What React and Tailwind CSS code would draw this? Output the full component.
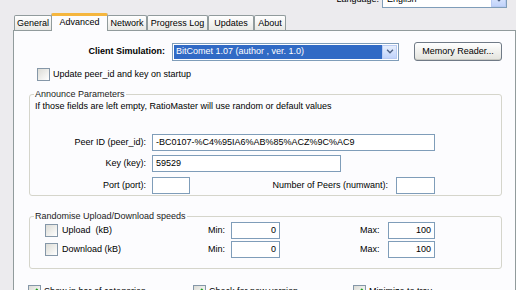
import React from "react";

const FONT = { fontFamily: '"Liberation Sans", Arial, sans-serif' };

function Check({ checked }) {
    return (
        <span className="relative inline-block w-[13px] h-[13px] shrink-0 border border-[#8597a8] bg-gradient-to-br from-[#dcdcd6] to-[#ffffff]">
            {checked && (
                <svg viewBox="0 0 11 11" className="absolute inset-0 w-[11px] h-[11px]">
                    <path d="M2.5 5.5 L4.5 7.5 L8.5 3" stroke="#21a121" strokeWidth="2" fill="none" />
                </svg>
            )}
        </span>
    );
}

function Arrow() {
    return (
        <svg viewBox="0 0 9 6" className="w-[8px] h-[5px]">
            <path d="M1 1 L4.5 4.5 L8 1" stroke="#4d6185" strokeWidth="1.6" fill="none" />
        </svg>
    );
}

function Field({ width, value, right }) {
    return (
        <div
            className={`h-[17px] border border-[#7f9db9] bg-white px-[3px] flex items-center leading-none ${right ? "justify-end" : ""}`}
            style={{ width }}
        >
            {value}
        </div>
    );
}

const TABS = [
    { name: "General", w: 38 },
    { name: "Advanced", w: 55, active: true },
    { name: "Network", w: 40 },
    { name: "Progress Log", w: 61 },
    { name: "Updates", w: 46 },
    { name: "About", w: 32 },
];

function App() {
    return (
        <div className="w-[516px] h-[290px] overflow-hidden bg-[#ecebee] text-[9px] text-black leading-[11px] flex flex-col" style={FONT}>
            {/* language */}
            <div className="h-[17px] -mt-[9px] flex items-center justify-end pr-[9px] gap-[3px]">
                <span>Language:</span>
                <div className="w-[125px] h-[17px] border border-[#7f9db9] bg-white flex items-center">
                    <span className="flex-1 pl-[4px]">English</span>
                    <div className="w-[15px] h-[15px] bg-gradient-to-b from-[#e6eefc] to-[#c1d3fb] border border-[#b9cbf3] flex items-center justify-center">
                        <Arrow />
                    </div>
                </div>
            </div>

            {/* tabs */}
            <div className="ml-[14px] mt-[5px] h-[18px] -mb-px flex items-end relative z-10">
                {TABS.map((t) =>
                    t.active ? (
                        <div key={t.name} className="h-[18px] -mx-[1px] border-x border-[#919b9c] border-t-[3px] border-t-[#f5b63e] bg-[#fcfcfe] flex items-start justify-center pt-[1px] rounded-t-[2px] whitespace-nowrap" style={{ width: t.w + 2 }}>
                            {t.name}
                        </div>
                    ) : (
                        <div key={t.name} className="h-[15px] mb-px border border-b-0 border-[#919b9c] bg-gradient-to-b from-[#ffffff] to-[#e8e8e4] flex items-center justify-center rounded-t-[2px] whitespace-nowrap" style={{ width: t.w }}>
                            {t.name}
                        </div>
                    )
                )}
            </div>

            {/* panel */}
            <div className="ml-[13px] w-[503px] flex-1 border border-[#919b9c] bg-[#fcfcfe] flex flex-col pt-[11px]">
                <div className="h-[19px] flex items-center">
                    <div className="w-[151px] text-right font-bold">Client Simulation:</div>
                    <div className="ml-[7px] w-[227px] h-[18px] border border-[#7f9db9] bg-white flex items-center p-[1px]">
                        <div className="flex-1 h-full bg-[#316ac5] text-white flex items-center pl-[2px]">BitComet 1.07 (author , ver. 1.0)</div>
                        <div className="w-[15px] h-full bg-gradient-to-b from-[#e6eefc] to-[#c1d3fb] border border-[#b9cbf3] flex items-center justify-center">
                            <Arrow />
                        </div>
                    </div>
                    <button className="ml-[15px] w-[88px] h-[19px] rounded-[3px] border border-[#707a86] bg-gradient-to-b from-[#ffffff] to-[#e3e3dd] shadow-[inset_0_-1px_0_#c9c9c2] whitespace-nowrap">
                        Memory Reader...
                    </button>
                </div>

                <div className="mt-[6px] h-[14px] flex items-center gap-[3px] ml-[23px]">
                    <Check />
                    <span>Update peer_id and key on startup</span>
                </div>

                <fieldset className="mt-[8px] ml-[15px] w-[473px] border border-[#d5d5cb] rounded-[3px] pb-[1px]">
                    <legend className="ml-[4px] px-[1px] text-[#222]">Announce Parameters</legend>
                    <div className="pl-[5px] mt-[1px]">If those fields are left empty, RatioMaster will use random or default values</div>
                    <div className="mt-[22px] h-[17px] flex items-center">
                        <div className="w-[116px] text-right">Peer ID (peer_id):</div>
                        <div className="ml-[6px]"><Field width={283} value="-BC0107-%C4%95IA6%AB%85%ACZ%9C%AC9" /></div>
                    </div>
                    <div className="mt-[4px] h-[17px] flex items-center">
                        <div className="w-[116px] text-right">Key (key):</div>
                        <div className="ml-[6px]"><Field width={189} value="59529" /></div>
                    </div>
                    <div className="mt-[5px] h-[17px] flex items-center">
                        <div className="w-[116px] text-right">Port (port):</div>
                        <div className="ml-[6px]"><Field width={38} value="" /></div>
                        <div className="w-[198px] text-right">Number of Peers (numwant):</div>
                        <div className="ml-[8px]"><Field width={39} value="" /></div>
                    </div>
                </fieldset>

                <fieldset className="mt-[15px] ml-[15px] w-[473px] border border-[#d5d5cb] rounded-[3px] pb-[10px] flex flex-col gap-[2px]">
                    <legend className="ml-[4px] px-[1px] text-[#222]">Randomise Upload/Download speeds</legend>
                    {[["Upload  (kB)", "0", "100"], ["Download (kB)", "0", "100"]].map(([label, min, max]) => (
                        <div key={label} className="h-[17px] flex items-center">
                            <div className="ml-[15px] w-[163px] flex items-center gap-[4px]">
                                <Check />
                                <span className="whitespace-pre">{label}</span>
                            </div>
                            <div className="w-[23px]">Min:</div>
                            <Field width={49} value={min} right />
                            <div className="ml-[80px] w-[28px]">Max:</div>
                            <Field width={47} value={max} right />
                        </div>
                    ))}
                </fieldset>

                <div className="mt-[15px] h-[14px] flex items-center">
                    <div className="ml-[14px] w-[165px] flex items-center gap-[3px]">
                        <Check checked />
                        <span>Show in bar of categories</span>
                    </div>
                    <div className="w-[160px] flex items-center gap-[3px]">
                        <Check checked />
                        <span>Check for new version</span>
                    </div>
                    <div className="flex items-center gap-[3px]">
                        <Check checked />
                        <span>Minimize to tray</span>
                    </div>
                </div>
            </div>
        </div>
    );
}

export default App;
